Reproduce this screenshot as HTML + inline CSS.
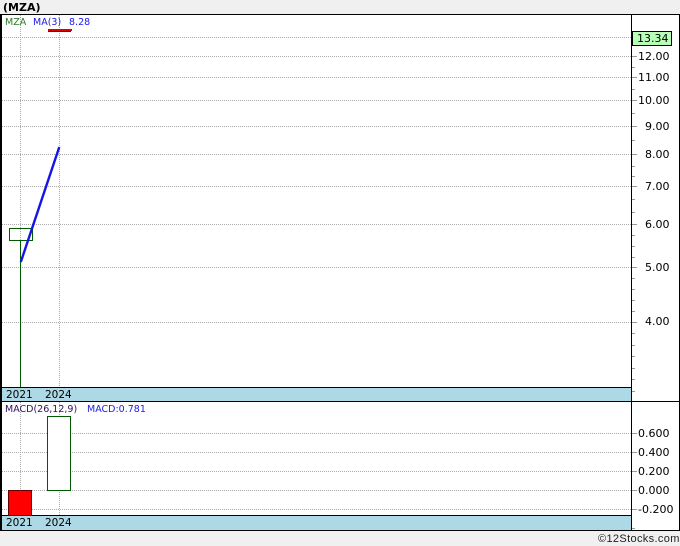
<!DOCTYPE html>
<html><head><meta charset="utf-8"><style>
html,body{margin:0;padding:0;background:#f0f0f0}
svg{display:block}
text{font-family:"DejaVu Sans",sans-serif;font-size:11px}
</style></head><body>
<svg width="680" height="546" viewBox="0 0 680 546" xmlns="http://www.w3.org/2000/svg">
<rect width="680" height="546" fill="#f0f0f0"/>
<rect x="0" y="14" width="680" height="517" fill="#fff"/>
<g shape-rendering="crispEdges">
<g stroke="#aaa" stroke-width="1" stroke-dasharray="1 1" fill="none">
<path d="M2 37.5H631M2 56.5H631M2 77.5H631M2 100.5H631M2 126.5H631M2 154.5H631M2 186.5H631M2 224.5H631M2 267.5H631M2 322.5H631"/>
<path d="M2 433.5H631M2 452.5H631M2 471.5H631M2 490.5H631M2 509.5H631"/>
<path d="M20.5 15V387M59.5 15V387M20.5 402V515M59.5 402V515"/>
</g>
<g stroke="#999" stroke-width="1" fill="none">
<path d="M632 37.5H637M632 56.5H637M632 77.5H637M632 100.5H637M632 126.5H637M632 154.5H637M632 186.5H637M632 224.5H637M632 267.5H637M632 322.5H637"/>
<path d="M632 67.5H635M632 89.5H635M632 113.5H635M632 140.5H635M632 166.5H635M632 176.5H635M632 199.5H635M632 212.5H635M632 235.5H635M632 246.5H635M632 257.5H635M632 278.5H635M632 289.5H635M632 300.5H635M632 311.5H635M632 333.5H635M632 345.5H635M632 356.5H635M632 368.5H635M632 379.5H635M632 391.5H635"/>
<path d="M632 433.5H637M632 452.5H637M632 471.5H637M632 490.5H637M632 509.5H637M632 528.5H635"/>
</g>
<rect x="2" y="388" width="629" height="13" fill="#add8e6"/>
<rect x="2" y="516" width="629" height="14" fill="#add8e6"/>
<path d="M0 14.5H680M0 387.5H632M0 401.5H680M0 515.5H632M0 530.5H680M679.5 14V531" stroke="#000" stroke-width="1" fill="none"/>
<rect x="0" y="14" width="2" height="517" fill="#000"/>
<rect x="631" y="14" width="1" height="517" fill="#000"/>
<path d="M20.5 240V387" stroke="#005a00" fill="none"/>
<rect x="9.5" y="228.5" width="23" height="12" fill="none" stroke="#005a00"/>
<rect x="47.5" y="416.5" width="23" height="74" fill="#fff" stroke="#005a00"/>
<rect x="8.5" y="490.5" width="23" height="25" fill="#f00" stroke="#600"/>
<rect x="48" y="29" width="24" height="2" fill="#e00000"/>
<rect x="48" y="31" width="23" height="1" fill="#700"/>
<rect x="632.5" y="31.5" width="39" height="14" fill="#b8ffb8" stroke="#000"/>
</g>
<path d="M20.8 262L59.3 147" stroke="#1515e8" stroke-width="2.4" fill="none"/>
<text x="3" y="11" style="font-weight:bold;font-size:11px" fill="#000">(MZA)</text>
<text x="5" y="25" style="font-size:9.5px" fill="#2a7a2a">MZA</text>
<text x="33" y="25" style="font-size:9.5px" fill="#2020e0">MA(3)</text>
<text x="69" y="25" style="font-size:9.5px" fill="#2020f0">8.28</text>
<text x="637" y="42" fill="#000">13.34</text>
<g fill="#000">
<text x="638" y="60">12.00</text>
<text x="638" y="81">11.00</text>
<text x="638" y="104">10.00</text>
<text x="645" y="130">9.00</text>
<text x="645" y="158">8.00</text>
<text x="645" y="190">7.00</text>
<text x="645" y="228">6.00</text>
<text x="645" y="271">5.00</text>
<text x="645" y="325">4.00</text>
<text x="638" y="437">0.600</text>
<text x="638" y="456">0.400</text>
<text x="638" y="475">0.200</text>
<text x="638" y="494">0.000</text>
<text x="638" y="513">-0.200</text>
<text x="6" y="398" style="font-size:10.5px">2021</text>
<text x="45" y="398" style="font-size:10.5px">2024</text>
<text x="6" y="526" style="font-size:10.5px">2021</text>
<text x="45" y="526" style="font-size:10.5px">2024</text>
</g>
<text x="5" y="412" style="font-size:9.5px" fill="#301060">MACD(26,12,9)</text>
<text x="87" y="412" style="font-size:9.5px" fill="#2020e0">MACD:0.781</text>
<text x="598" y="542" style="font-family:'Liberation Sans',sans-serif;font-size:11px;letter-spacing:.35px" fill="#222">©12Stocks.com</text>
</svg>
</body></html>
